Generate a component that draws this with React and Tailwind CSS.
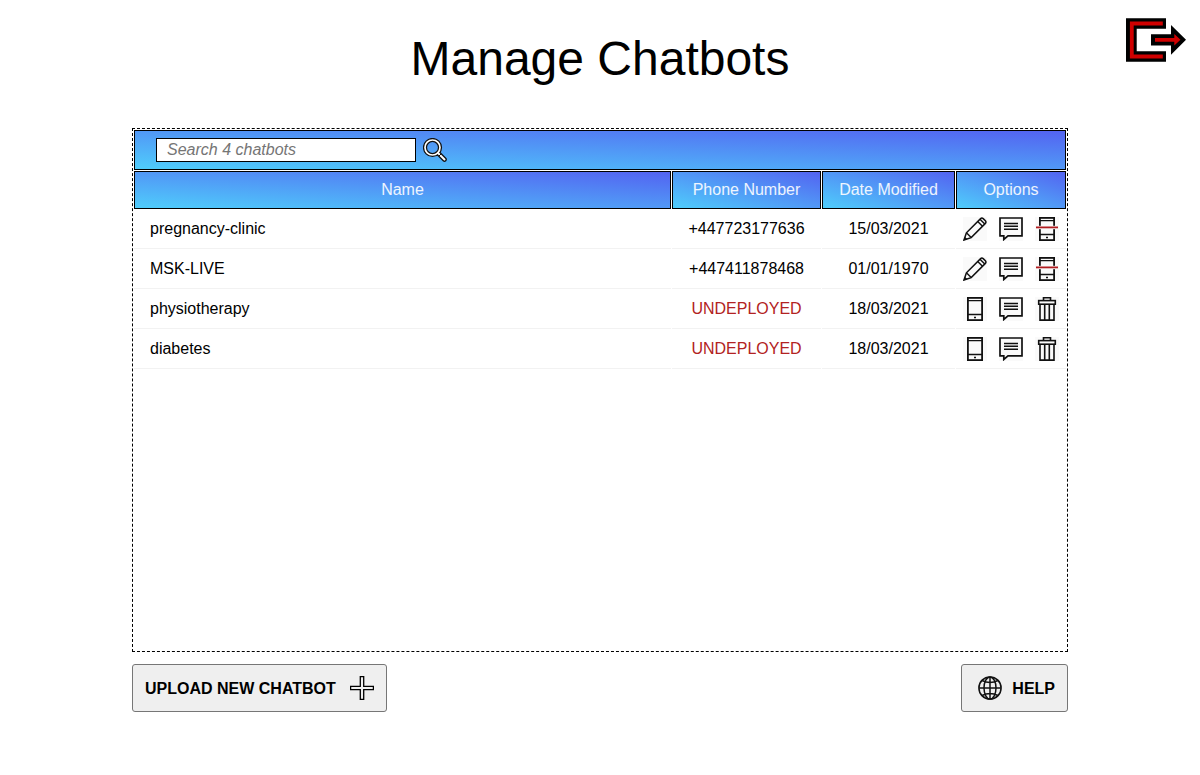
const chatbots = [
  { name: 'pregnancy-clinic', phone: '+447723177636', modified: '15/03/2021' },
  { name: 'MSK-LIVE', phone: '+447411878468', modified: '01/01/1970' },
  { name: 'physiotherapy', phone: null, modified: '18/03/2021' },
  { name: 'diabetes', phone: null, modified: '18/03/2021' },
];

const columns = 'grid grid-cols-[537px_149px_133px_110px] gap-x-px';

function Icon({ label, children }) {
  return (
    <button type="button" aria-label={label} className="size-6 shrink-0">
      <svg viewBox="0 0 24 24" className="size-6" fill="none" stroke="#111" strokeWidth="1.7">
        <rect width="24" height="24" fill="#fafafa" stroke="none" />
        {children}
      </svg>
    </button>
  );
}

function EditIcon() {
  return (
    <Icon label="Edit">
      <path d="M1 23 3.4 15.8 17.6 1.6Q18.9.5 20.2 1.6L22.4 3.8Q23.5 5.1 22.4 6.4L8.2 20.6Z" strokeWidth="1.5" />
      <path d="M3.4 15.8 8.2 20.6M14.7 4.5 19.5 9.3M17 2.2 21.8 7" strokeWidth="1.4" />
      <path d="M.5 23.5 1.9 19.8 4.2 22.1Z" fill="#111" stroke="none" />
    </Icon>
  );
}

function MessageIcon() {
  return (
    <Icon label="Messages">
      <path d="M1 1H23V18.8H9L4.8 22.5V18.8H1Z" fill="#fafafa" />
      <path d="M5 6.5H19M5 9.3H19M5 12.2H19" strokeWidth="1.5" />
    </Icon>
  );
}

function Phone() {
  return (
    <>
      <rect x="4.9" y=".9" width="14.2" height="22.2" strokeWidth="1.8" />
      <path d="M5 3.6H19M5 17.5H19" strokeWidth="1.3" />
      <path d="M11 20.4H13" strokeWidth="1.5" />
    </>
  );
}

function DeployIcon() {
  return <Icon label="Deploy"><Phone /></Icon>;
}

function UndeployIcon() {
  return (
    <Icon label="Undeploy">
      <Phone />
      <path d="M1 10.5H23" stroke="#fafafa" strokeWidth="3.4" />
      <path d="M1 10.4H23" stroke="#b01c20" strokeWidth="1.8" />
    </Icon>
  );
}

function TrashIcon() {
  return (
    <Icon label="Delete">
      <path d="M8.5 3.4V.8H15.5V3.4" strokeWidth="1.6" />
      <rect x="3.7" y="3.6" width="16.6" height="3.6" strokeWidth="1.6" />
      <path d="M5 7.2V23.1H19V7.2M9.7 7.2V23M14.3 7.2V23" strokeWidth="1.6" />
    </Icon>
  );
}

function HeaderCell({ children }) {
  return (
    <div className="flex h-[38px] items-center justify-center border border-black bg-[linear-gradient(to_top_right,#4fcdfb,#5363f1)] pb-px text-white/90">
      {children}
    </div>
  );
}

function Row({ bot }) {
  return (
    <div className={columns}>
      <div className="flex h-10 items-center border-b border-[#f2f2f2] pl-4">{bot.name}</div>
      <div className="flex h-10 items-center justify-center border-b border-[#f2f2f2]">
        {bot.phone ?? <span className="text-[#b22222]">UNDEPLOYED</span>}
      </div>
      <div className="flex h-10 items-center justify-center border-b border-[#f2f2f2]">{bot.modified}</div>
      <div className="flex h-10 items-center gap-3 border-b border-[#f2f2f2] pt-px pl-[7px]">
        {bot.phone ? <EditIcon /> : <DeployIcon />}
        <MessageIcon />
        {bot.phone ? <UndeployIcon /> : <TrashIcon />}
      </div>
    </div>
  );
}

export default function App() {
  return (
    <div className="h-[775px] overflow-hidden bg-white font-['Liberation_Sans',Arial,sans-serif] text-base text-black">
      <header className="grid h-32 grid-cols-[1fr_auto_1fr] items-start">
        <h1 className="col-start-2 pt-[31px] text-[48px] leading-[55px]">Manage Chatbots</h1>
        <button type="button" aria-label="Log out" className="mt-[18px] mr-[14px] justify-self-end">
          <svg viewBox="0 0 60 44" className="h-11 w-[60px]">
            <path d="M0 .3H40V10.7H10.7V33.3H40V43.7H0Z" fill="#000" />
            <path d="M36.8 5.5H5.8V38.5H36.8" fill="none" stroke="#d00000" strokeWidth="3.8" />
            <path d="M25 16.3H45V7L60 21.8 45 36.8V27.5H25Z" fill="#000" />
            <path d="M29 20H48.3V16L54.5 21.8 48.3 27.6V23.8H29Z" fill="#d00000" />
          </svg>
        </button>
      </header>

      <main className="mx-auto w-[936px]">
        <section className="h-[524px] border border-dashed border-black p-px">
          <div className="flex h-10 items-center border border-black bg-[linear-gradient(to_top_right,#4fcdfb,#5363f1)] pl-[21px]">
            <input
              type="text"
              placeholder="Search 4 chatbots"
              className="h-6 w-[260px] border border-black bg-white px-2.5 italic outline-none placeholder:text-[#757575]"
            />
            <svg viewBox="0 0 24 24" className="ml-[7px] size-6" fill="none">
              <path d="M15.5 15.5 21.5 21.5" stroke="#111" strokeWidth="4.6" strokeLinecap="round" />
              <circle cx="9.5" cy="9.5" r="7.5" stroke="#111" strokeWidth="4.2" />
              <circle cx="9.5" cy="9.5" r="7.5" stroke="#fff" strokeWidth="1.7" />
              <path d="M15 15 21.5 21.5" stroke="#fff" strokeWidth="2" strokeLinecap="round" />
              <path d="m16 18 2-2" stroke="#111" strokeWidth="1" />
            </svg>
          </div>
          <div className={`${columns} mt-px`}>
            <HeaderCell>Name</HeaderCell>
            <HeaderCell>Phone Number</HeaderCell>
            <HeaderCell>Date Modified</HeaderCell>
            <HeaderCell>Options</HeaderCell>
          </div>
          {chatbots.map((bot) => <Row key={bot.name} bot={bot} />)}
        </section>

        <footer className="mt-3 flex justify-between font-bold">
          <button type="button" className="flex h-12 w-[255px] items-center justify-between rounded-[3px] border border-[#767676] bg-[#efefef] px-3">
            <span className="pt-0.5">UPLOAD NEW CHATBOT</span>
            <svg viewBox="0 0 24 24" className="size-6" fill="#efefef" stroke="#000" strokeWidth="1.3">
              <path d="M10.3.6H13.7V10.3H23.4V13.7H13.7V23.4H10.3V13.7H.6V10.3H10.3Z" />
            </svg>
          </button>
          <button type="button" className="flex h-12 w-[107px] items-center justify-between rounded-[3px] border border-[#767676] bg-[#efefef] pr-3 pl-4">
            <svg viewBox="0 0 24 24" className="size-6" fill="none" stroke="#111" strokeWidth="1.5">
              <circle cx="12" cy="12" r="11.1" />
              <ellipse cx="12" cy="12" rx="6" ry="11.1" />
              <path d="M12 1V23M1 12H23M4 4.5Q12 8.5 20 4.5M4 19.5Q12 15.5 20 19.5" />
            </svg>
            <span className="pt-0.5">HELP</span>
          </button>
        </footer>
      </main>
    </div>
  );
}
